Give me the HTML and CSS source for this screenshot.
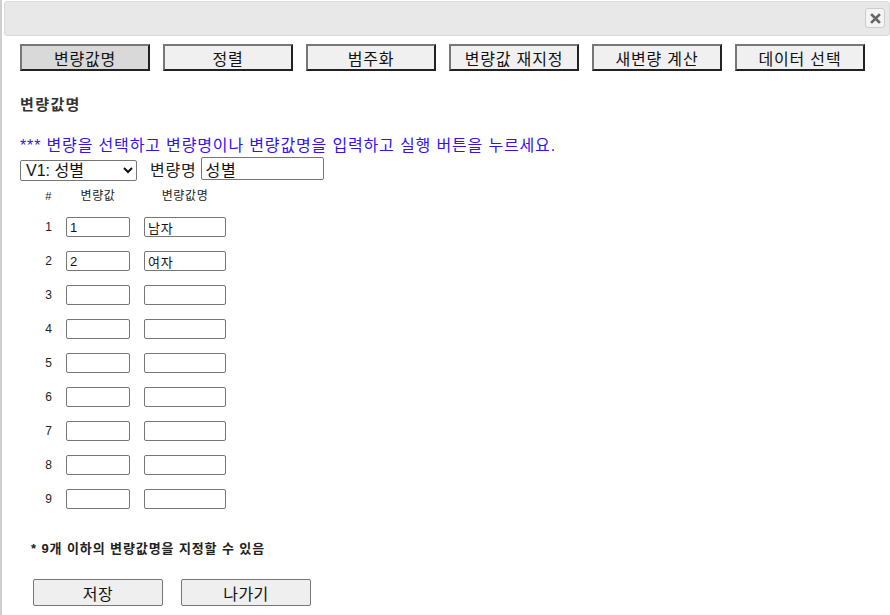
FILE: index.html
```html
<!DOCTYPE html>
<html lang="ko">
<head>
<meta charset="utf-8">
<link rel="stylesheet" href="styles.css">
</head>
<body>
<div class="dialog">
  <div class="titlebar">
    <button class="close" type="button" aria-label="close">
      <svg width="11" height="11" viewBox="0 0 11 11"><path d="M2 2 L9 9 M9 2 L2 9" stroke="#666" stroke-width="2.6" stroke-linecap="square"/></svg>
    </button>
  </div>
  <div class="content">
    <div class="tabs">
      <button class="tab active">변량값명</button>
      <button class="tab">정렬</button>
      <button class="tab">범주화</button>
      <button class="tab">변량값 재지정</button>
      <button class="tab">새변량 계산</button>
      <button class="tab">데이터 선택</button>
    </div>
    <h2 class="heading">변량값명</h2>
    <p class="hint">*** 변량을 선택하고 변량명이나 변량값명을 입력하고 실행 버튼을 누르세요.</p>
    <div class="varrow">
      <select class="varsel"><option>V1: 성별</option></select>
      <span class="varlabel">변량명</span>
      <input class="varname" type="text" value="성별">
    </div>
    <div class="grid">
      <div class="hd num-hd">#</div><div class="hd">변량값</div><div class="hd">변량값명</div>
      <div class="num">1</div><input class="val" value="1"><input class="lbl" value="남자">
      <div class="num">2</div><input class="val" value="2"><input class="lbl" value="여자">
      <div class="num">3</div><input class="val"><input class="lbl">
      <div class="num">4</div><input class="val"><input class="lbl">
      <div class="num">5</div><input class="val"><input class="lbl">
      <div class="num">6</div><input class="val"><input class="lbl">
      <div class="num">7</div><input class="val"><input class="lbl">
      <div class="num">8</div><input class="val"><input class="lbl">
      <div class="num">9</div><input class="val"><input class="lbl">
    </div>
    <p class="note">* 9개 이하의 변량값명을 지정할 수 있음</p>
    <div class="actions">
      <button class="act">저장</button>
      <button class="act">나가기</button>
    </div>
  </div>
</div>
</body>
</html>
```
FILE: styles.css
```css
* { box-sizing: border-box; }
html, body {
  margin: 0;
  padding: 0;
  background: #fff;
  font-family: "Liberation Sans", "Noto Sans CJK KR", sans-serif;
  color: #111;
}
.dialog {
  border-left: 2px solid #cfcfcf;
  height: 615px;
  padding: 1px 0 0 2px;
}
.titlebar {
  height: 35px;
  background: #e8e8e8;
  border: 1px solid #dadada;
  border-radius: 3px;
  display: flex;
  justify-content: flex-end;
  align-items: center;
  padding-right: 4px;
}
.close {
  width: 20px;
  height: 20px;
  margin-top: -1px;
  padding: 0;
  background: #f4f4f4;
  border: 1px solid #cccccc;
  border-radius: 3px;
  display: flex;
  align-items: center;
  justify-content: center;
}
.content {
  padding-left: 16px;
}
.tabs {
  display: flex;
  gap: 13px;
  margin-top: 8px;
}
.tab {
  width: 130px;
  height: 27px;
  padding: 0;
  font-family: "Liberation Sans", "Noto Sans CJK KR", sans-serif;
  font-size: 16px;
  letter-spacing: 0.8px;
  color: #111;
  background: #f0f0f0;
  border: 2px solid;
  border-color: #777 #222 #222 #777;
  border-radius: 0;
}
.tab.active {
  background: #d9d9d9;
}
.heading {
  margin: 24px 0 0;
  font-size: 15px;
  letter-spacing: 1.4px;
  font-weight: bold;
  line-height: 20px;
  color: #333;
}
.hint {
  margin: 21px 0 0;
  font-size: 16px;
  letter-spacing: 0.85px;
  line-height: 20px;
  color: #3311f0;
}
.varrow {
  display: flex;
  align-items: center;
  height: 25px;
}
.varsel {
  width: 117px;
  height: 21px;
  margin-top: 3px;
  font-family: "Liberation Sans", "Noto Sans CJK KR", sans-serif;
  font-size: 16px;
  color: #111;
  background: #fff;
  border: 1px solid #767676;
  border-radius: 2px;
  padding: 0 0 0 1px;
}
.varlabel {
  font-size: 16px;
  letter-spacing: 0.8px;
  margin: 0 4px 0 13px;
  color: #222;
}
.varname {
  width: 123px;
  height: 23px;
  font-family: "Liberation Sans", "Noto Sans CJK KR", sans-serif;
  font-size: 16px;
  letter-spacing: 0.8px;
  color: #111;
  border: 1px solid #767676;
  border-radius: 2px;
  padding: 0 4px;
}
.grid {
  display: grid;
  grid-template-columns: 22px 64px 82px;
  column-gap: 14px;
  grid-auto-rows: 20px;
  row-gap: 14px;
  margin: 2px 0 0 10px;
  align-items: center;
}
.grid .hd {
  font-size: 12px;
  letter-spacing: 0.6px;
  text-align: center;
  color: #222;
  line-height: 14px;
  align-self: end;
}
.grid .num-hd {
  font-size: 11px;
  text-align: right;
  padding-right: 0;
}
.num {
  font-size: 12px;
  text-align: right;
  padding-right: 0;
  color: #222;
}
.grid input {
  height: 20px;
  width: 100%;
  font-family: "Liberation Sans", "Noto Sans CJK KR", sans-serif;
  font-size: 13px;
  letter-spacing: 0.8px;
  color: #111;
  border: 1px solid #767676;
  border-radius: 2px;
  padding: 0 3px;
  margin: 0;
}
.note {
  margin: 30px 0 0 11px;
  font-size: 13px;
  letter-spacing: 0.9px;
  font-weight: bold;
  color: #222;
  line-height: 20px;
}
.actions {
  display: flex;
  gap: 18px;
  margin: 20px 0 0 13px;
}
.act {
  width: 130px;
  height: 27px;
  padding: 0;
  font-family: "Liberation Sans", "Noto Sans CJK KR", sans-serif;
  font-size: 16px;
  letter-spacing: 0.5px;
  color: #111;
  background: #efefef;
  border: 1px solid #767676;
  border-radius: 2px;
}
```
